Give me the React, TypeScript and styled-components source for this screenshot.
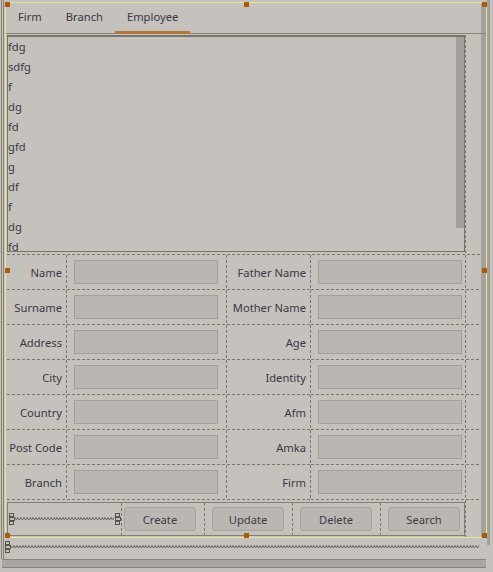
import React from "react";
import styled, { createGlobalStyle } from "styled-components";

const BG = "#c5c1bd";
const DASH = "#7f776c";
const LINE = "#8a8379";
const YELLOW = "#ede48f";
const HANDLE = "#a95b0b";
const STRIP = "#a4a09d";
const TEXT = "#3b3744";
const FONT = `"Noto Sans", "Open Sans", "DejaVu Sans", sans-serif`;

const dashV = `repeating-linear-gradient(to bottom, ${DASH} 0 3px, transparent 3px 5px)`;
const dashH = `repeating-linear-gradient(to right, ${DASH} 0 3px, transparent 3px 5px)`;

const Global = createGlobalStyle`
  html, body { margin: 0; padding: 0; background: ${BG}; }
  body { font-family: ${FONT}; font-size: 11.2px; color: ${TEXT}; }
  * { box-sizing: border-box; }
`;

const Page = styled.div`
  width: 493px;
  height: 572px;
  overflow: hidden;
  display: flex;
  flex-direction: column;
  background: ${BG};
`;

const Workspace = styled.div`
  display: flex;
  height: 559px;
  flex: none;
`;

const LeftGutter = styled.div`
  width: 5px;
  flex: none;
  background: linear-gradient(
    to right,
    ${BG} 0 1px,
    ${LINE} 1px 2px,
    ${BG} 2px 3px,
    ${LINE} 3px 4px,
    ${BG} 4px 5px
  );
`;

const Center = styled.div`
  width: 482px;
  flex: none;
  display: flex;
  flex-direction: column;
  padding-top: 2px;
`;

const RightStrip = styled.div`
  width: 3px;
  height: 545px;
  flex: none;
  background: ${STRIP};
`;

const Selection = styled.div`
  position: relative;
  height: 536px;
  flex: none;
  border: 1px solid ${YELLOW};
  display: flex;
  flex-direction: column;
`;

const Handle = styled.span<{ $x: "l" | "c" | "r"; $y: "t" | "m" | "b" }>`
  position: absolute;
  width: 5px;
  height: 5px;
  background: ${HANDLE};
  ${(p) => (p.$x === "l" ? "left: -1px;" : p.$x === "c" ? "left: 238px;" : "right: -1px;")}
  ${(p) => (p.$y === "t" ? "top: -1px;" : p.$y === "m" ? "top: 265px;" : "bottom: -1px;")}
`;

const TabBar = styled.div`
  display: flex;
  height: 31px;
  flex: none;
  border-bottom: 1px solid ${LINE};
`;

const Tab = styled.div<{ $active?: boolean }>`
  display: flex;
  align-items: center;
  padding: 0 12px 1px;
  margin-bottom: -1px;
  border-bottom: 3px solid ${(p) => (p.$active ? "#b0763a" : "transparent")};
  color: ${TEXT};
  white-space: nowrap;
`;

const TabStrip = styled.div`
  margin-left: auto;
  width: 5px;
  background: ${STRIP};
`;

const Body = styled.div`
  flex: 1;
  display: flex;
  min-height: 0;
`;

const Content = styled.div`
  flex: 1;
  display: flex;
  flex-direction: column;
  padding: 1px 0 0 1px;
  background: ${dashV} 459px 1px / 1px 100% no-repeat;
`;

const BodyStrip = styled.div`
  width: 5px;
  flex: none;
  background: ${STRIP};
`;

const List = styled.div`
  width: 458px;
  height: 217px;
  flex: none;
  display: flex;
  border: 1px solid #7b746a;
  border-top-width: 2px;
  background: ${BG};
`;

const Items = styled.div`
  flex: 1;
  overflow: hidden;
  line-height: 20px;
  color: ${TEXT};
`;

const Item = styled.div`
  height: 20px;
  white-space: nowrap;
`;

const ScrollTrack = styled.div`
  width: 8px;
  flex: none;
`;

const Thumb = styled.div`
  height: 191px;
  background: #a3a09c;
`;

const FormGrid = styled.div`
  width: 474px;
  margin-top: 2px;
  padding-top: 1px;
  display: grid;
  grid-template-columns: 60px 160px 84px 155px 15px;
  grid-auto-rows: 35px;
  background: ${dashH} 0 0 / 100% 1px no-repeat;
`;

const LabelCell = styled.div`
  display: flex;
  align-items: center;
  justify-content: flex-end;
  padding: 0 5px 1px 0;
  white-space: nowrap;
  color: ${TEXT};
  background: ${dashH} left bottom / 100% 1px no-repeat, ${dashV} right top / 1px 100% no-repeat;
`;

const FieldCell = styled.div`
  display: flex;
  align-items: center;
  padding: 0 0 1px 7px;
  background: ${dashH} left bottom / 100% 1px no-repeat, ${dashV} right top / 1px 100% no-repeat;
`;

const FillCell = styled.div`
  background: ${dashH} left bottom / 100% 1px no-repeat;
`;

const Field = styled.input`
  width: 144px;
  height: 24px;
  border: 1px solid #a29e9b;
  border-radius: 0;
  background: #bab6b3;
  padding: 0 4px;
  font: inherit;
  outline: none;
`;

const ButtonBox = styled.div`
  width: 458px;
  height: 34px;
  margin-top: 2px;
  flex: none;
  border: 1px solid #857e74;
  display: grid;
  grid-template-columns: 114px 83px 88px 88px 83px;
`;

const BarCell = styled.div<{ $pad: number; $last?: boolean }>`
  display: flex;
  align-items: center;
  padding-left: ${(p) => p.$pad}px;
  background: ${(p) => (p.$last ? "none" : `${dashV} right top / 1px 100% no-repeat`)};
`;

const Button = styled.button`
  width: 72px;
  height: 24px;
  padding: 0;
  border: 1px solid #a8a4a0;
  border-radius: 3px;
  background: #bab6b2;
  color: #403c47;
  font-family: ${FONT};
  font-size: 11.2px;
  cursor: default;
`;

const SpringRow = styled.div`
  height: 13px;
  margin-top: 2px;
  display: flex;
  align-items: center;
`;

const BottomBar = styled.div`
  height: 9px;
  width: 484px;
  margin-left: 2px;
  flex: none;
  border-top: 1px solid ${LINE};
  border-bottom: 1px solid ${LINE};
  background: #a9a5a2;
`;

const Glyph = ({ x }: { x: number }) => (
  <g transform={`translate(${x} 0)`} fill="none" stroke="#5a544e" strokeWidth="1">
    <rect x="0.5" y="0.5" width="4" height="3" />
    <rect x="0.5" y="4.5" width="5" height="3" />
    <rect x="0.5" y="8.5" width="4" height="3" />
  </g>
);

function Spring({ width, rightGlyph = true }: { width: number; rightGlyph?: boolean }) {
  const start = 6;
  const end = rightGlyph ? width - 6 : width - 1;
  const pts: string[] = [];
  let up = true;
  for (let x = start; x <= end; x += 1.5) {
    pts.push(`${x},${up ? 4.5 : 7}`);
    up = !up;
  }
  return (
    <svg width={width} height={12} viewBox={`0 0 ${width} 12`}>
      <Glyph x={0} />
      <polyline points={pts.join(" ")} fill="none" stroke="#6a645d" strokeWidth="1" />
      {rightGlyph && <Glyph x={width - 6} />}
    </svg>
  );
}

const items = ["fdg", "sdfg", "f", "dg", "fd", "gfd", "g", "df", "f", "dg", "fd"];

const rows: [string, string][] = [
  ["Name", "Father Name"],
  ["Surname", "Mother Name"],
  ["Address", "Age"],
  ["City", "Identity"],
  ["Country", "Afm"],
  ["Post Code", "Amka"],
  ["Branch", "Firm"],
];

export default function App() {
  return (
    <Page>
      <Global />
      <Workspace>
        <LeftGutter />
        <Center>
          <Selection>
            <TabBar>
              <Tab>Firm</Tab>
              <Tab>Branch</Tab>
              <Tab $active>Employee</Tab>
              <TabStrip />
            </TabBar>
            <Body>
              <Content>
                <List>
                  <Items>
                    {items.map((t, i) => (
                      <Item key={i}>{t}</Item>
                    ))}
                  </Items>
                  <ScrollTrack>
                    <Thumb />
                  </ScrollTrack>
                </List>
                <FormGrid>
                  {rows.map(([a, b]) => (
                    <React.Fragment key={a}>
                      <LabelCell>{a}</LabelCell>
                      <FieldCell>
                        <Field readOnly />
                      </FieldCell>
                      <LabelCell>{b}</LabelCell>
                      <FieldCell>
                        <Field readOnly />
                      </FieldCell>
                      <FillCell />
                    </React.Fragment>
                  ))}
                </FormGrid>
                <ButtonBox>
                  <BarCell $pad={1}>
                    <Spring width={112} />
                  </BarCell>
                  <BarCell $pad={2}>
                    <Button>Create</Button>
                  </BarCell>
                  <BarCell $pad={7}>
                    <Button>Update</Button>
                  </BarCell>
                  <BarCell $pad={7}>
                    <Button>Delete</Button>
                  </BarCell>
                  <BarCell $pad={7} $last>
                    <Button>Search</Button>
                  </BarCell>
                </ButtonBox>
              </Content>
              <BodyStrip />
            </Body>
            <Handle $x="l" $y="t" />
            <Handle $x="c" $y="t" />
            <Handle $x="r" $y="t" />
            <Handle $x="l" $y="m" />
            <Handle $x="r" $y="m" />
            <Handle $x="l" $y="b" />
            <Handle $x="c" $y="b" />
            <Handle $x="r" $y="b" />
          </Selection>
          <SpringRow>
            <Spring width={476} rightGlyph={false} />
          </SpringRow>
        </Center>
        <RightStrip />
      </Workspace>
      <BottomBar />
    </Page>
  );
}
